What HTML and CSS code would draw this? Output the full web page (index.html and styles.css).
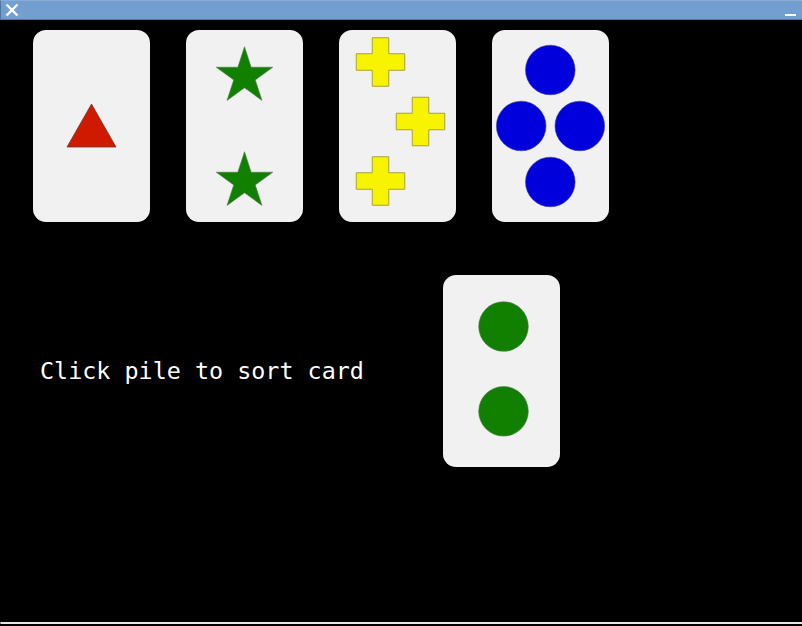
FILE: index.html
```html
<!DOCTYPE html>
<html lang="en">

<head>
  <meta charset="UTF-8">
  <meta name="viewport" content="width=device-width, initial-scale=1.0">
  <title>Card Sort</title>
  <link rel="stylesheet" href="styles.css">
</head>

<body>
  <!-- Window title bar -->
  <div class="titlebar">
    <svg class="close-icon" width="14" height="14" viewBox="0 0 14 14">
      <line x1="1.5" y1="1.5" x2="12.5" y2="12.5" />
      <line x1="12.5" y1="1.5" x2="1.5" y2="12.5" />
    </svg>
    <span class="minimize"></span>
  </div>

  <div class="board">
    <!-- Sorting piles -->
    <div class="piles">
      <div class="card">
        <svg viewBox="0 0 117 192" width="117" height="192">
          <polygon class="red" points="58.5,74 34,117 83,117" />
        </svg>
      </div>
      <div class="card">
        <svg viewBox="0 0 117 192" width="117" height="192">
          <g transform="translate(58.5,46.4)">
            <polygon class="green"
              points="0,-29.7 6.67,-9.18 28.25,-9.18 10.79,3.51 17.46,24.03 0,11.35 -17.46,24.03 -10.79,3.51 -28.25,-9.18 -6.67,-9.18" />
          </g>
          <g transform="translate(58.5,151.4)">
            <polygon class="green"
              points="0,-29.7 6.67,-9.18 28.25,-9.18 10.79,3.51 17.46,24.03 0,11.35 -17.46,24.03 -10.79,3.51 -28.25,-9.18 -6.67,-9.18" />
          </g>
        </svg>
      </div>
      <div class="card">
        <svg viewBox="0 0 117 192" width="117" height="192">
          <g transform="translate(41.5,32)">
            <polygon class="yellow"
              points="-8.25,-24.25 8.25,-24.25 8.25,-8.25 24.25,-8.25 24.25,8.25 8.25,8.25 8.25,24.25 -8.25,24.25 -8.25,8.25 -24.25,8.25 -24.25,-8.25 -8.25,-8.25" />
          </g>
          <g transform="translate(81.5,91.5)">
            <polygon class="yellow"
              points="-8.25,-24.25 8.25,-24.25 8.25,-8.25 24.25,-8.25 24.25,8.25 8.25,8.25 8.25,24.25 -8.25,24.25 -8.25,8.25 -24.25,8.25 -24.25,-8.25 -8.25,-8.25" />
          </g>
          <g transform="translate(41.5,151)">
            <polygon class="yellow"
              points="-8.25,-24.25 8.25,-24.25 8.25,-8.25 24.25,-8.25 24.25,8.25 8.25,8.25 8.25,24.25 -8.25,24.25 -8.25,8.25 -24.25,8.25 -24.25,-8.25 -8.25,-8.25" />
          </g>
        </svg>
      </div>
      <div class="card">
        <svg viewBox="0 0 117 192" width="117" height="192">
          <circle class="blue" cx="58.3" cy="40" r="24.8" />
          <circle class="blue" cx="29.2" cy="96" r="24.8" />
          <circle class="blue" cx="87.8" cy="96" r="24.8" />
          <circle class="blue" cx="58.3" cy="152" r="24.8" />
        </svg>
      </div>
    </div>

    <!-- Card to sort -->
    <div class="current">
      <p class="hint">Click pile to sort card</p>
      <div class="card">
        <svg viewBox="0 0 117 192" width="117" height="192">
          <circle class="green" cx="60.5" cy="51.5" r="24.8" />
          <circle class="green" cx="60.5" cy="136.3" r="24.8" />
        </svg>
      </div>
    </div>
  </div>

  <div class="statusline"></div>
</body>

</html>
```

FILE: styles.css
```css
/* Reset */
html,
body {
  margin: 0;
  padding: 0;
}

body {
  background-color: #000;
  width: 802px;
  height: 626px;
  display: flex;
  flex-direction: column;
  overflow: hidden;
}

/* Title bar */
.titlebar {
  height: 18px;
  background-color: #729fcf;
  border-top: 1px solid #8aaed8;
  border-bottom: 1px solid #4f74a0;
  border-left: 1px solid #4f74a0;
  display: flex;
  align-items: center;
  justify-content: space-between;
  padding: 0 6px 0 4px;
}

.close-icon line {
  stroke: #fff;
  stroke-width: 2.4;
}

.minimize {
  width: 11px;
  height: 2px;
  background-color: #fff;
  margin-top: 9px;
}

/* Playing area */
.board {
  flex: 1;
}

.piles {
  display: flex;
  gap: 36px;
  padding: 10px 0 0 33px;
}

.card {
  width: 117px;
  height: 192px;
  background-color: #f1f1f1;
  border-radius: 13px;
  flex-shrink: 0;
}

.card svg {
  display: block;
}

.current {
  display: flex;
  align-items: center;
  margin-top: 53px;
  padding-left: 40px;
}

.hint {
  width: 403px;
  margin: 2px 0 0 0;
  color: #fff;
  font-family: "DejaVu Sans Mono", monospace;
  font-size: 23.4px;
  line-height: 1;
}

/* Shapes */
.red {
  fill: #d01a00;
  stroke: #6a3a30;
  stroke-width: 0.8;
}

.green {
  fill: #118000;
  stroke: #4f7a48;
  stroke-width: 0.6;
}

.yellow {
  fill: #f8f400;
  stroke: #a8a23a;
  stroke-width: 1;
}

.blue {
  fill: #0000dd;
  stroke: #40408a;
  stroke-width: 0.6;
}

/* Bottom edge */
.statusline {
  height: 2px;
  background-color: #e6e6e6;
  border-left: 1px solid #888;
  margin-bottom: 2px;
}
```
